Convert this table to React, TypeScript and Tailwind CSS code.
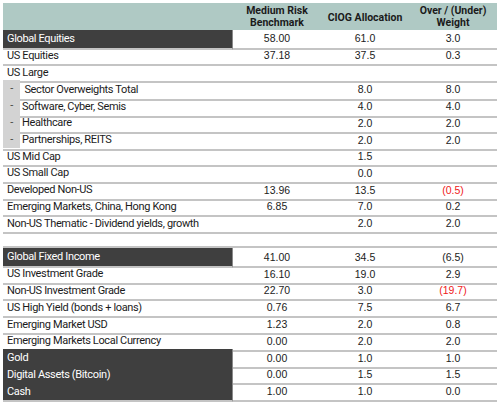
import React from "react";

type Row = {
  label: string;
  a?: string;
  b?: string;
  c?: string;
  red?: boolean;
  dark?: boolean;
  sub?: boolean;
  blank?: boolean;
};

const rows: Row[] = [
  { label: "Global Equities", a: "58.00", b: "61.0", c: "3.0", dark: true },
  { label: "US Equities", a: "37.18", b: "37.5", c: "0.3" },
  { label: "US Large" },
  { label: "\u00a0Sector Overweights Total", b: "8.0", c: "8.0", sub: true },
  { label: "Software, Cyber, Semis", b: "4.0", c: "4.0", sub: true },
  { label: "Healthcare", b: "2.0", c: "2.0", sub: true },
  { label: "Partnerships, REITS", b: "2.0", c: "2.0", sub: true },
  { label: "US Mid Cap", b: "1.5" },
  { label: "US Small Cap", b: "0.0" },
  { label: "Developed Non-US", a: "13.96", b: "13.5", c: "(0.5)", red: true },
  { label: "Emerging Markets, China, Hong Kong", a: "6.85", b: "7.0", c: "0.2" },
  { label: "Non-US Thematic - Dividend yields, growth", b: "2.0", c: "2.0" },
  { label: "", blank: true },
  { label: "Global Fixed Income", a: "41.00", b: "34.5", c: "(6.5)", dark: true },
  { label: "US Investment Grade", a: "16.10", b: "19.0", c: "2.9" },
  { label: "Non-US Investment Grade", a: "22.70", b: "3.0", c: "(19.7)", red: true },
  { label: "US High Yield (bonds + loans)", a: "0.76", b: "7.5", c: "6.7" },
  { label: "Emerging Market USD", a: "1.23", b: "2.0", c: "0.8" },
  { label: "Emerging Markets Local Currency", a: "0.00", b: "2.0", c: "2.0" },
  { label: "Gold", a: "0.00", b: "1.0", c: "1.0", dark: true },
  { label: "Digital Assets (Bitcoin)", a: "0.00", b: "1.5", c: "1.5", dark: true },
  { label: "Cash", a: "1.00", b: "1.0", c: "0.0", dark: true },
];

const labelFont = { fontFamily: "Roboto, 'Liberation Sans', sans-serif" };

export default function App() {
  return (
    <div className="w-[500px] h-[406px] bg-white pt-[3px] pl-[3px]">
      <div className="w-[494px]">
        <div
          className="grid grid-cols-[230px_88px_88px_88px] h-[27px] bg-[#afc9c4] text-[#1b1b1b] font-bold text-[10.5px] leading-[12px]"
          style={labelFont}
        >
          <div />
          <div className="flex items-center justify-center text-center pt-[1px]">
            Medium Risk
            <br />
            Benchmark
          </div>
          <div className="flex items-center justify-center text-center pt-[3px]">CIOG Allocation</div>
          <div className="flex items-center justify-center text-center pt-[1px]">
            Over / (Under)
            <br />
            Weight
          </div>
        </div>
        {rows.map((r, i) => {
          const next = rows[i + 1];
          const darkBorder = r.dark && next && next.dark;
          return (
            <div
              key={i}
              className="grid grid-cols-[230px_88px_88px_88px] h-[16.8px] text-[#1b1b1b]"
            >
              <div
                className={
                  "flex items-center border-b-2 text-[11px] tracking-[-0.35px] " +
                  (r.dark
                    ? "bg-[#3f3f3f] text-white border-r border-r-[#8a8a8a] " +
                      (darkBorder ? "border-b-[#5c5c5c]" : "border-b-[#c4c4c4]")
                    : "border-[#c4c4c4]")
                }
                style={labelFont}
              >
                {r.sub ? (
                  <>
                    <div className="w-[17px] h-full bg-[#d3d3d3] flex items-center justify-center pt-[1px] border-b border-white text-[#444]">
                      -
                    </div>
                    <span className="pl-[2px] pt-[1px]">{r.label}</span>
                  </>
                ) : (
                  <span className="pl-[4px] pt-[1px]">{r.label}</span>
                )}
              </div>
              {[r.a, r.b, r.c].map((v, j) => (
                <div
                  key={j}
                  className={
                    "flex items-center justify-center pt-[1px] border-b-2 border-[#c4c4c4] text-[10.5px] " +
                    (j === 2 && r.red ? "text-[#f02020]" : "")
                  }
                  style={{ fontFamily: "'Liberation Sans', Arial, sans-serif" }}
                >
                  {v ?? ""}
                </div>
              ))}
            </div>
          );
        })}
      </div>
    </div>
  );
}
